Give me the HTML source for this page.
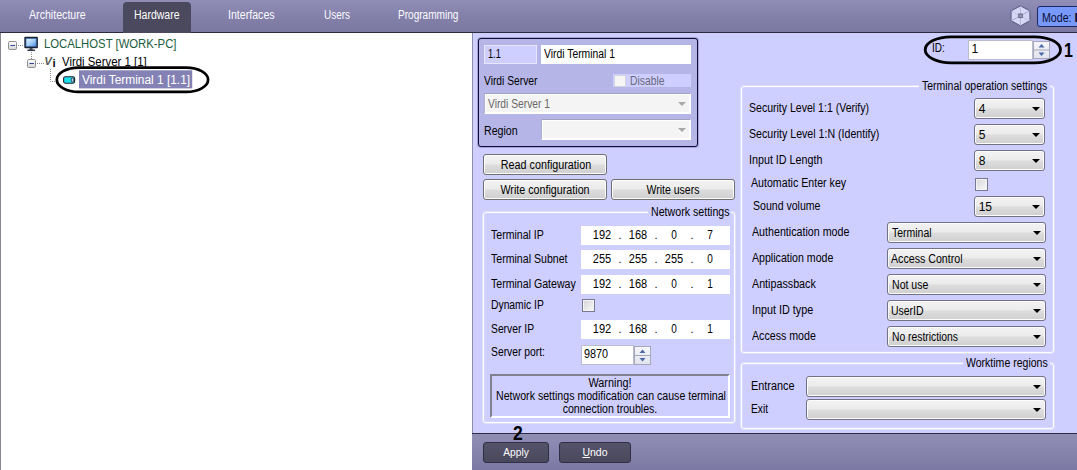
<!DOCTYPE html>
<html>
<head>
<meta charset="utf-8">
<title>Virdi Terminal</title>
<style>
html,body{margin:0;padding:0;}
body{width:1077px;height:470px;overflow:hidden;position:relative;background:#fff;font-family:"Liberation Sans","DejaVu Sans",sans-serif;font-size:11px;color:#000;}
.abs{position:absolute;}
#hdr{left:0;top:0;width:1077px;height:33px;background:linear-gradient(#908eb6,#827fa9 55%,#7b79a2);border-bottom:1px solid #2c2a3e;box-sizing:border-box;}
.tab{position:absolute;top:8px;color:#fcfcff;font-size:12px;white-space:nowrap;line-height:14px;transform-origin:0 50%;}
#hw{left:123px;top:2px;width:68px;height:31px;background:#4b495d;border-radius:4px 4px 0 0;}
#right{left:472px;top:33px;width:605px;height:401px;background:#ceceff;border-left:1px solid #8c8cab;box-sizing:border-box;}
#bot{left:472px;top:433px;width:605px;height:37px;background:linear-gradient(#918fb6,#7b79a3);border-top:1px solid #2e2c44;box-sizing:border-box;}
.t{position:absolute;white-space:nowrap;line-height:13px;font-size:12px;transform-origin:0 50%;}
.c{position:absolute;white-space:nowrap;line-height:13px;font-size:12px;width:0;display:flex;justify-content:center;transform-origin:0 50%;}
.tree{position:absolute;white-space:nowrap;line-height:15px;font-size:12px;transform-origin:0 50%;}
.fld{position:absolute;box-sizing:border-box;background:#fff;}
.grp{position:absolute;box-sizing:border-box;border:1px solid #fff;border-radius:3px;box-shadow:0 0 0 1px rgba(255,255,255,.32),inset 0 0 0 1px rgba(255,255,255,.12);}
.capbg{position:absolute;background:#ceceff;height:3px;}
.btn{position:absolute;box-sizing:border-box;border:1px solid #707070;border-radius:3px;background:linear-gradient(#f3f3f3,#ebebeb 48%,#dddddd 52%,#cfcfcf);box-shadow:inset 0 0 0 1px #fcfcfc;}
.cmb{position:absolute;box-sizing:border-box;border:1px solid #727284;border-radius:3px;background:linear-gradient(#f3f3f3,#ebebeb 48%,#dddddd 52%,#cfcfcf);box-shadow:inset 0 0 0 1px #fcfcfc;}
.cmb:after{content:"";position:absolute;right:4px;top:8px;border-left:4px solid transparent;border-right:4px solid transparent;border-top:4px solid #000;}
.dbtn{position:absolute;box-sizing:border-box;border:1px solid #302e44;border-radius:3px;background:linear-gradient(#55536a,#4a485c);}
.chk{position:absolute;box-sizing:border-box;width:13px;height:13px;border:1px solid #787890;background:linear-gradient(135deg,#d4d4d8,#fafafa);box-shadow:inset 0 0 0 1px #f4f4f4;}
.ip{position:absolute;box-sizing:border-box;background:#fff;height:19px;width:149px;left:581px;}
.ip span{position:absolute;top:3.500px;line-height:13px;width:36px;text-align:center;font-size:12px;transform-origin:50% 50%;}
.ip i{position:absolute;top:3.500px;line-height:13px;width:6px;text-align:center;font-style:normal;}
.o1{left:3px}.o2{left:39px}.o3{left:75px}.o4{left:111px}
.d1{left:36px}.d2{left:72px}.d3{left:108px}
.spin{position:absolute;box-sizing:border-box;width:17px;height:19px;border:1px solid #a4a8b8;background:linear-gradient(#f6f6fa,#e2e4ee);}
</style>
</head>
<body>
<!-- header -->
<div id="hdr" class="abs"></div>
<div id="hw" class="abs"></div>
<div class="tab" style="left:28.800px;transform:scaleX(0.886)">Architecture</div>
<div class="tab" style="left:134px;color:#fff;transform:scaleX(0.874)">Hardware</div>
<div class="tab" style="left:228.200px;transform:scaleX(0.884)">Interfaces</div>
<div class="tab" style="left:323.500px;transform:scaleX(0.830)">Users</div>
<div class="tab" style="left:397.700px;transform:scaleX(0.839)">Programming</div>
<svg class="abs" style="left:1008px;top:3px" width="26" height="26" viewBox="0 0 26 26">
 <polygon points="12.500,2.800 21.900,7.800 21.900,17.800 12.500,22.900 3.100,17.800 3.100,7.800" fill="#d6d6f6" stroke="#64628a" stroke-width="1.100" stroke-linejoin="round"/>
 <path d="M12.500 2.800V22.900M3.100 7.800L21.900 17.800M21.900 7.800L3.100 17.800" stroke="#a6a4cc" stroke-width="0.900"/>
 <path d="M12.500 3.500V22M4 8.300L21 17.300" stroke="#ececff" stroke-width="0.500" transform="translate(0.700,0)"/>
 <rect x="10.700" y="11" width="3.600" height="3.600" fill="#9a98b8" stroke="#606082" stroke-width="0.900"/>
</svg>
<div class="abs" style="left:1037px;top:6px;width:46px;height:21px;box-sizing:border-box;border:1.500px solid #1c2864;border-radius:3px;background:#7799fb;"></div>
<div class="t" style="left:1041.800px;top:10.500px;font-size:12px;line-height:14px;color:#080c30;transform:scaleX(0.884)">Mode:</div>
<div class="t" style="left:1074.500px;top:10.500px;font-size:12px;line-height:14px;color:#080c30;font-weight:bold">Demo</div>

<!-- tree -->
<div class="abs" style="left:0;top:33px;width:1px;height:437px;background:#868a90"></div>
<svg class="abs" style="left:0;top:33px" width="230" height="70" viewBox="0 33 230 70">
 <defs>
  <linearGradient id="gbx" x1="0" y1="0" x2="0" y2="1"><stop offset="0" stop-color="#fdfdfd"/><stop offset="1" stop-color="#d4d4d4"/></linearGradient>
  <linearGradient id="gsc" x1="0" y1="0" x2="1" y2="1"><stop offset="0" stop-color="#e6f4ff"/><stop offset="0.500" stop-color="#a8d0fa"/><stop offset="1" stop-color="#4a8ee0"/></linearGradient>
 </defs>
 <g stroke="#8c8c8c" stroke-width="1" stroke-dasharray="1 1" fill="none">
  <path d="M18 45.500H24"/><path d="M31.500 52V59"/><path d="M37 63.500H44"/><path d="M50.500 69V81.500H57"/>
 </g>
 <g fill="url(#gbx)" stroke="#909090">
  <rect x="8.500" y="41.500" width="8" height="8" rx="1.200"/><rect x="27.500" y="59.500" width="8" height="8" rx="1.200"/>
 </g>
 <path d="M10.500 45.500h4.500M29.500 63.500h4.500" stroke="#34409a" stroke-width="1.200"/>
 <!-- computer icon -->
 <rect x="24.300" y="36.800" width="13.600" height="11.400" rx="1" fill="#1a2232"/>
 <rect x="26" y="38.500" width="10.200" height="8" fill="url(#gsc)" stroke="#3c6cb4" stroke-width="0.700"/>
 <rect x="29.600" y="48.200" width="3" height="1.600" fill="#2a3244"/><rect x="27.400" y="49.600" width="7.600" height="1.300" fill="#1a2232"/>
 <!-- Vi icon -->
 <text x="44.300" y="65.300" font-family="Liberation Sans, DejaVu Sans, sans-serif" font-style="italic" font-weight="bold" font-size="11.500" fill="#5e5e5e" textLength="7.600" lengthAdjust="spacingAndGlyphs">V</text>
 <text x="52.600" y="66.500" font-family="Liberation Sans, DejaVu Sans, sans-serif" font-weight="bold" font-size="11.500" fill="#0c0c0c">i</text>
 <!-- terminal icon -->
 <rect x="63.600" y="76.800" width="11" height="6.400" rx="1.600" fill="#1ce0ec" stroke="#1c2430" stroke-width="1.100"/>
 <rect x="71.300" y="78" width="2.300" height="4" rx="1" fill="#c8d8e0" stroke="#1c2430" stroke-width="0.700"/>
 <rect x="79" y="70.300" width="113.200" height="18.100" fill="#8482b4"/>
 <rect x="56.800" y="67.600" width="151.300" height="24.300" rx="22" ry="12.150" fill="none" stroke="#000" stroke-width="2.700"/>
</svg>
<div class="tree" style="left:43.500px;top:36.700px;color:#1c5c40;transform:scaleX(0.943)">LOCALHOST [WORK-PC]</div>
<div class="tree" style="left:62px;top:55px;transform:scaleX(0.950)">Virdi Server 1 [1]</div>
<div class="tree" style="left:81.500px;top:72.500px;color:#fff;transform:scaleX(0.992)">Virdi Terminal 1 [1.1]</div>

<!-- right panel -->
<div id="right" class="abs"></div>
<div id="bot" class="abs"></div>

<!-- top box -->
<div class="abs" style="left:478px;top:38px;width:220px;height:109px;box-sizing:border-box;border:1px solid #0c0c36;border-radius:3px;background:#b5b5e8;box-shadow:0 0 0 1px rgba(60,60,120,.3)"></div>
<div class="fld" style="left:484px;top:45px;width:53px;height:19px;background:#ceceff;border:1px solid #e6e6ff"></div>
<div class="t" style="left:487.900px;top:48px;transform:scaleX(0.767)">1.1</div>
<div class="fld" style="left:541px;top:45px;width:150px;height:19px"></div>
<div class="t" style="left:544px;top:48px;transform:scaleX(0.863)">Virdi Terminal 1</div>
<div class="t" style="left:484.200px;top:75px;transform:scaleX(0.855)">Virdi Server</div>
<div class="abs" style="left:613px;top:73.500px;width:78px;height:13.500px;background:#ceceff"></div>
<div class="chk" style="left:614px;top:74.500px;width:11.500px;height:12px;border-color:#d4d4e0;background:#f5f5f5;box-shadow:none"></div>
<div class="t" style="left:629.500px;top:75px;color:#6a6a7c;transform:scaleX(0.862)">Disable</div>
<div class="fld" style="left:484px;top:93px;width:207px;height:21px;background:#f4f4f4;border:1px solid;border-color:#a0a0c0 #fff #fff #b0b0d0;box-shadow:inset 0 0 0 1px #fff"></div>
<div class="t" style="left:488px;top:97.500px;color:#686868;transform:scaleX(0.855)">Virdi Server 1</div>
<div class="abs" style="left:678px;top:102px;border-left:4px solid transparent;border-right:4px solid transparent;border-top:4px solid #a8a8a8"></div>
<div class="t" style="left:484.200px;top:125px;transform:scaleX(0.886)">Region</div>
<div class="fld" style="left:541px;top:119px;width:150px;height:21px;background:#f4f4f4;border:1px solid;border-color:#a0a0c0 #fff #fff #b0b0d0;box-shadow:inset 0 0 0 1px #fff"></div>
<div class="abs" style="left:678px;top:128px;border-left:4px solid transparent;border-right:4px solid transparent;border-top:4px solid #a8a8a8"></div>

<!-- buttons -->
<div class="btn" style="left:483px;top:154px;width:124px;height:21px"></div>
<div class="c" style="left:545.500px;top:158.500px;transform:scaleX(0.897)">Read configuration</div>
<div class="btn" style="left:483px;top:179px;width:124px;height:21px"></div>
<div class="c" style="left:544.900px;top:183.500px;transform:scaleX(0.893)">Write configuration</div>
<div class="btn" style="left:611px;top:179px;width:124px;height:21px"></div>
<div class="c" style="left:672.800px;top:183.500px;transform:scaleX(0.876)">Write users</div>

<!-- network settings -->
<div class="grp" style="left:483px;top:212px;width:252px;height:211px"></div>
<div class="capbg" style="left:648px;top:211px;width:83px"></div>
<div class="t" style="left:650.600px;top:205.500px;transform:scaleX(0.886)">Network settings</div>
<div class="t" style="left:490.600px;top:228.500px;transform:scaleX(0.880)">Terminal IP</div>
<div class="t" style="left:490.600px;top:252.500px;transform:scaleX(0.882)">Terminal Subnet</div>
<div class="t" style="left:490.600px;top:277.500px;transform:scaleX(0.882)">Terminal Gateway</div>
<div class="t" style="left:490.600px;top:299px;transform:scaleX(0.861)">Dynamic IP</div>
<div class="t" style="left:490.600px;top:322.500px;transform:scaleX(0.860)">Server IP</div>
<div class="t" style="left:490.600px;top:345.500px;transform:scaleX(0.861)">Server port:</div>
<div class="ip" style="top:225.500px"><span class="o1" style="transform:scaleX(0.919)">192</span><i class="d1">.</i><span class="o2" style="transform:scaleX(0.919)">168</span><i class="d2">.</i><span class="o3" style="transform:scaleX(0.837)">0</span><i class="d3">.</i><span class="o4" style="transform:scaleX(0.837)">7</span></div>
<div class="ip" style="top:249.500px"><span class="o1" style="transform:scaleX(0.919)">255</span><i class="d1">.</i><span class="o2" style="transform:scaleX(0.919)">255</span><i class="d2">.</i><span class="o3" style="transform:scaleX(0.919)">255</span><i class="d3">.</i><span class="o4" style="transform:scaleX(0.837)">0</span></div>
<div class="ip" style="top:274.500px"><span class="o1" style="transform:scaleX(0.919)">192</span><i class="d1">.</i><span class="o2" style="transform:scaleX(0.919)">168</span><i class="d2">.</i><span class="o3" style="transform:scaleX(0.837)">0</span><i class="d3">.</i><span class="o4" style="transform:scaleX(0.837)">1</span></div>
<div class="chk" style="left:582px;top:299px;width:13px;height:13px"></div>
<div class="ip" style="top:319.500px"><span class="o1" style="transform:scaleX(0.919)">192</span><i class="d1">.</i><span class="o2" style="transform:scaleX(0.919)">168</span><i class="d2">.</i><span class="o3" style="transform:scaleX(0.837)">0</span><i class="d3">.</i><span class="o4" style="transform:scaleX(0.837)">1</span></div>
<div class="fld" style="left:581px;top:345px;width:52.500px;height:19.500px;border:1px solid #bcbcd0"></div>
<div class="t" style="left:584.200px;top:348px;transform:scaleX(0.903)">9870</div>
<div class="spin" style="left:634px;top:345.500px"></div>
<svg class="abs" style="left:634px;top:345.500px" width="17" height="19"><path d="M5.500 7L8.500 3.500L11.500 7Z M5.500 12L8.500 15.500L11.500 12Z" fill="#4c68a8"/><path d="M1 9.500H16" stroke="#a4a8b8"/></svg>
<div class="abs" style="left:490px;top:374px;width:240px;height:44px;box-sizing:border-box;border:2px solid;border-color:#80808e #fff #fff #80808e;"></div>
<div class="c" style="left:609.600px;top:376.500px;transform:scaleX(0.904)">Warning!</div>
<div class="c" style="left:611.200px;top:389.500px;transform:scaleX(0.884)">Network settings modification can cause terminal</div>
<div class="c" style="left:609.800px;top:403px;transform:scaleX(0.881)">connection troubles.</div>

<!-- terminal operation settings -->
<div class="grp" style="left:741px;top:86px;width:312.500px;height:267px"></div>
<div class="capbg" style="left:919px;top:85px;width:131px"></div>
<div class="t" style="left:922.100px;top:79.500px;transform:scaleX(0.873)">Terminal operation settings</div>
<div class="t" style="left:749.400px;top:102px;transform:scaleX(0.878)">Security Level 1:1 (Verify)</div>
<div class="t" style="left:749.400px;top:127.500px;transform:scaleX(0.884)">Security Level 1:N (Identify)</div>
<div class="t" style="left:749.400px;top:154px;transform:scaleX(0.894)">Input ID Length</div>
<div class="t" style="left:751px;top:177px;transform:scaleX(0.886)">Automatic Enter key</div>
<div class="t" style="left:752.600px;top:199.500px;transform:scaleX(0.879)">Sound volume</div>
<div class="t" style="left:752px;top:226px;transform:scaleX(0.890)">Authentication mode</div>
<div class="t" style="left:752px;top:251.500px;transform:scaleX(0.884)">Application mode</div>
<div class="t" style="left:752px;top:277.500px;transform:scaleX(0.894)">Antipassback</div>
<div class="t" style="left:752px;top:303.500px;transform:scaleX(0.901)">Input ID type</div>
<div class="t" style="left:752px;top:330px;transform:scaleX(0.886)">Access mode</div>
<div class="cmb" style="left:974px;top:98px;width:71px;height:21px"></div>
<div class="cmb" style="left:974px;top:124px;width:71px;height:21px"></div>
<div class="cmb" style="left:974px;top:150px;width:71px;height:21px"></div>
<div class="chk" style="left:975px;top:178px"></div>
<div class="cmb" style="left:974px;top:196px;width:71px;height:21px"></div>
<div class="cmb" style="left:887px;top:222px;width:159px;height:21px"></div>
<div class="cmb" style="left:887px;top:248px;width:159px;height:21px"></div>
<div class="cmb" style="left:887px;top:274px;width:159px;height:21px"></div>
<div class="cmb" style="left:887px;top:300px;width:159px;height:21px"></div>
<div class="cmb" style="left:887px;top:326px;width:159px;height:21px"></div>
<div class="t" style="left:978.700px;top:102.500px">4</div>
<div class="t" style="left:978.700px;top:128.500px">5</div>
<div class="t" style="left:978.700px;top:154.500px">8</div>
<div class="t" style="left:978.700px;top:200.500px">15</div>
<div class="t" style="left:891.800px;top:227px;transform:scaleX(0.873)">Terminal</div>
<div class="t" style="left:891.200px;top:253px;transform:scaleX(0.886)">Access Control</div>
<div class="t" style="left:891.800px;top:279px;transform:scaleX(0.880)">Not use</div>
<div class="t" style="left:891.200px;top:305px;transform:scaleX(0.870)">UserID</div>
<div class="t" style="left:891.800px;top:331px;transform:scaleX(0.861)">No restrictions</div>

<!-- worktime regions -->
<div class="grp" style="left:741px;top:363px;width:312.500px;height:65.500px"></div>
<div class="capbg" style="left:963px;top:362px;width:87px"></div>
<div class="t" style="left:965.600px;top:356.500px;transform:scaleX(0.877)">Worktime regions</div>
<div class="t" style="left:751.200px;top:379.500px;transform:scaleX(0.904)">Entrance</div>
<div class="t" style="left:751.200px;top:402.500px;transform:scaleX(0.854)">Exit</div>
<div class="cmb" style="left:806px;top:376px;width:240px;height:21px"></div>
<div class="cmb" style="left:806px;top:399px;width:240px;height:21px"></div>

<!-- ID -->
<div class="t" style="left:932.400px;top:41.500px;transform:scaleX(0.834)">ID:</div>
<div class="fld" style="left:968px;top:40px;width:65px;height:19.500px;border:1px solid #bcbcd0"></div>
<div class="t" style="left:971.500px;top:42.500px">1</div>
<div class="spin" style="left:1033px;top:41px;height:17.500px"></div>
<svg class="abs" style="left:1033px;top:40.500px" width="17" height="18"><path d="M5.500 6.500L8.500 3L11.500 6.500Z M5.500 11.500L8.500 15L11.500 11.500Z" fill="#4c68a8"/><path d="M1 9H16" stroke="#a4a8b8"/></svg>
<svg class="abs" style="left:915px;top:30px" width="155" height="40" viewBox="915 30 155 40"><rect x="925.200" y="36.800" width="135.300" height="26" rx="26" ry="13" fill="none" stroke="#000" stroke-width="2.800"/></svg>
<div class="abs" style="left:1064px;top:38.500px;font-weight:bold;font-size:20px;line-height:22px;transform:scaleX(.8);transform-origin:0 50%">1</div>

<!-- bottom -->
<div class="abs" style="left:512.500px;top:421.500px;font-weight:bold;font-size:20px;line-height:22px;transform:scaleX(.88);transform-origin:0 50%">2</div>
<div class="dbtn" style="left:483px;top:442px;width:66px;height:21px"></div>
<div class="c" style="left:516.000px;top:445.500px;color:#fff;font-size:11.5px;transform:scaleX(0.889)">Apply</div>
<div class="dbtn" style="left:559px;top:442px;width:72px;height:21px"></div>
<div class="c" style="left:594.900px;top:445.500px;color:#fff;font-size:11.5px;transform:scaleX(0.913)"><u>U</u>ndo</div>
</body>
</html>
